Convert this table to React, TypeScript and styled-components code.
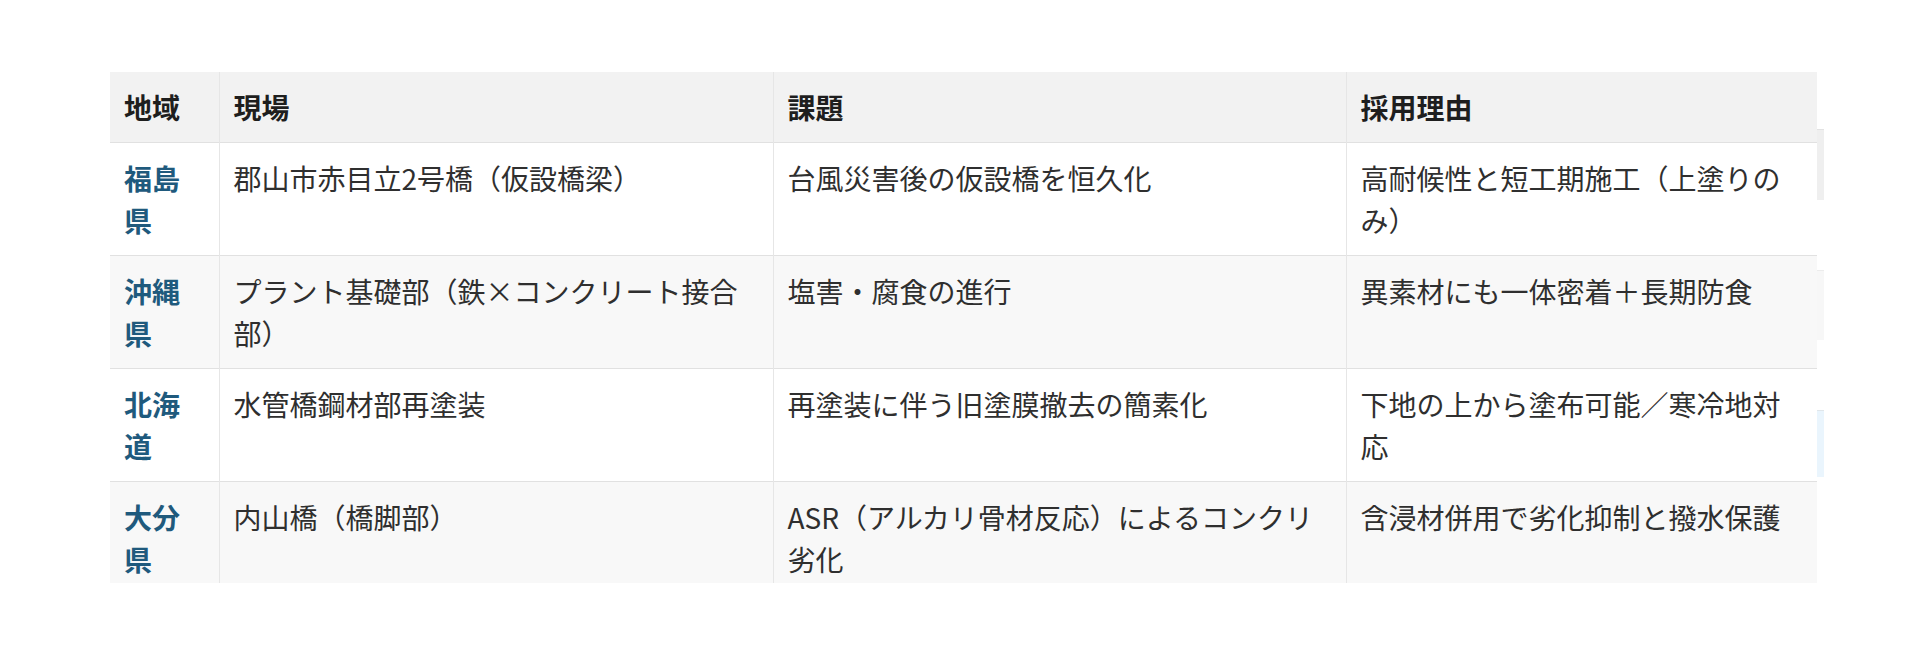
import React, { FC } from 'react';
import styled, { createGlobalStyle } from 'styled-components';

interface ICaseRow {
  region: string;
  site: string;
  issue: string;
  reason: string;
}

const rows: ICaseRow[] = [
  {
    region: '福島県',
    site: '郡山市赤目立2号橋（仮設橋梁）',
    issue: '台風災害後の仮設橋を恒久化',
    reason: '高耐候性と短工期施工（上塗りのみ）',
  },
  {
    region: '沖縄県',
    site: 'プラント基礎部（鉄×コンクリート接合部）',
    issue: '塩害・腐食の進行',
    reason: '異素材にも一体密着＋長期防食',
  },
  {
    region: '北海道',
    site: '水管橋鋼材部再塗装',
    issue: '再塗装に伴う旧塗膜撤去の簡素化',
    reason: '下地の上から塗布可能／寒冷地対応',
  },
  {
    region: '大分県',
    site: '内山橋（橋脚部）',
    issue: 'ASR（アルカリ骨材反応）によるコンクリ劣化',
    reason: '含浸材併用で劣化抑制と撥水保護',
  },
];

const strips = [
  { top: 57, height: 71, color: '#efefef', line: '#e2e2e2' },
  { top: 70, height: 70, color: '#f7f7f7', line: '#ececec' },
  { top: 70, height: 67, color: '#eaf5fd', line: '#e0e6ea' },
];

const GlobalStyle = createGlobalStyle`
  html, body {
    margin: 0;
    padding: 0;
    background: #fff;
  }
  body {
    font-family: 'Noto Sans CJK JP', 'Noto Sans', sans-serif;
    color: #333;
  }
`;

const Page = styled.div`
  display: flex;
  align-items: flex-start;
  padding: 72px 0 0 110px;
  height: 662px;
  box-sizing: border-box;
`;

const TableScroller = styled.div`
  width: 1707px;
  height: 511px;
  overflow: hidden;
`;

const EdgeStrips = styled.div`
  display: flex;
  flex-direction: column;
  width: 7px;
`;

const Strip = styled.div<{ $top: number; $height: number; $color: string; $line: string }>`
  margin-top: ${(p) => p.$top}px;
  height: ${(p) => p.$height}px;
  background-color: ${(p) => p.$color};
  border-top: 1px solid ${(p) => p.$line};
  box-sizing: border-box;
`;

const Table = styled.table`
  width: 1707px;
  table-layout: fixed;
  border-collapse: collapse;
  font-size: 28px;
  line-height: 42px;
`;

const HeadRow = styled.tr`
  background-color: #f2f2f2;
`;

const BodyRow = styled.tr<{ $striped: boolean }>`
  background-color: ${(p) => (p.$striped ? '#f8f8f8' : '#fff')};
  border-top: 1px solid #e1e1e1;
`;

const Th = styled.th`
  text-align: left;
  vertical-align: top;
  font-weight: 700;
  color: #1e1e1e;
  padding: 14px;
  border-left: 1px solid #e6e6e6;

  &:first-child {
    border-left: none;
  }
`;

const Td = styled.td`
  vertical-align: top;
  padding: 14px;
  color: #2f2f2f;
  border-left: 1px solid #e6e6e6;
`;

const RegionCell = styled.td`
  vertical-align: top;
  padding: 14px;
  font-weight: 700;
  color: #1f5a7d;
`;

const CaseTable: FC = () => (
  <Table lang="ja">
    <colgroup>
      <col style={{ width: 109 }} />
      <col style={{ width: 554 }} />
      <col style={{ width: 573 }} />
      <col style={{ width: 471 }} />
    </colgroup>
    <thead>
      <HeadRow>
        <Th>地域</Th>
        <Th>現場</Th>
        <Th>課題</Th>
        <Th>採用理由</Th>
      </HeadRow>
    </thead>
    <tbody>
      {rows.map((row, i) => (
        <BodyRow key={row.region} $striped={i % 2 === 1}>
          <RegionCell>{row.region}</RegionCell>
          <Td>{row.site}</Td>
          <Td>{row.issue}</Td>
          <Td>{row.reason}</Td>
        </BodyRow>
      ))}
    </tbody>
  </Table>
);

const App: FC = () => (
  <>
    <GlobalStyle />
    <Page>
      <TableScroller>
        <CaseTable />
      </TableScroller>
      <EdgeStrips>
        {strips.map((s, i) => (
          <Strip key={i} $top={s.top} $height={s.height} $color={s.color} $line={s.line} />
        ))}
      </EdgeStrips>
    </Page>
  </>
);

export default App;
